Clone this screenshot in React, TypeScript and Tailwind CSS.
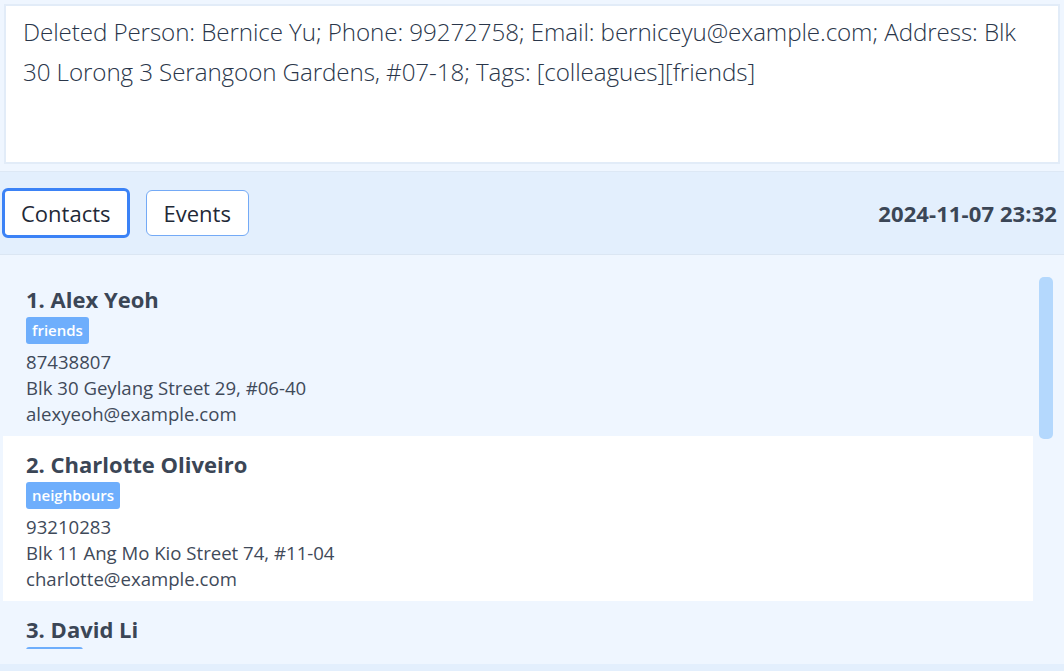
type Person = {
  name: string;
  tags: string[];
  phone: string;
  address: string;
  email: string;
};

const people: Person[] = [
  {
    name: "Alex Yeoh",
    tags: ["friends"],
    phone: "87438807",
    address: "Blk 30 Geylang Street 29, #06-40",
    email: "alexyeoh@example.com",
  },
  {
    name: "Charlotte Oliveiro",
    tags: ["neighbours"],
    phone: "93210283",
    address: "Blk 11 Ang Mo Kio Street 74, #11-04",
    email: "charlotte@example.com",
  },
  {
    name: "David Li",
    tags: ["family"],
    phone: "91031282",
    address: "Blk 436 Serangoon Gardens Street 26, #16-43",
    email: "lidavid@example.com",
  },
];

function PersonCard({ person, index }: { person: Person; index: number }) {
  return (
    <div
      className={
        "h-[165px] shrink-0 px-[23px] pt-[14px] pb-[9px] " +
        (index % 2 === 1 ? "bg-white" : "bg-[#eff6ff]")
      }
    >
      <div className="text-[22px] leading-[28px] font-bold text-[#3b4656]">
        {index + 1}. {person.name}
      </div>
      <div className="mt-[4px] flex gap-[5px]">
        {person.tags.map((tag) => (
          <span
            key={tag}
            className="h-[27px] px-[6px] rounded-[3px] bg-[#6eaefc] text-white text-[15px] leading-[27px] font-semibold"
          >
            {tag}
          </span>
        ))}
      </div>
      <div className="mt-[5px] text-[18.6px] leading-[26px] text-[#3f4a5a]">
        <div>{person.phone}</div>
        <div>{person.address}</div>
        <div>{person.email}</div>
      </div>
    </div>
  );
}

export default function App() {
  return (
    <div
      className="w-full h-[671px] flex flex-col overflow-hidden bg-[#eff6ff]"
      style={{ fontFamily: '"Open Sans", "Noto Sans", sans-serif' }}
    >
      {/* result display */}
      <div className="h-[172px] shrink-0 p-[4px] border-b border-[#dde8f5]">
        <div className="h-[160px] bg-white border-2 border-[#e2ecf8] px-[17px] pt-[6px]">
          <p className="text-[24.2px] leading-[40px] font-light text-[#2a364a] tracking-[-0.1px]">
            Deleted Person: Bernice Yu; Phone: 99272758; Email: berniceyu@example.com; Address: Blk 30 Lorong 3
            Serangoon Gardens, #07-18; Tags: [colleagues][friends]
          </p>
        </div>
      </div>

      {/* toolbar */}
      <div className="h-[83px] shrink-0 bg-[#e3effd] border-b border-[#dbe6f3] flex items-center justify-between pl-[2px] pr-[7px]">
        <div className="flex items-center gap-[16px]">
          <button className="h-[50px] px-[16px] rounded-[6px] border-[3px] border-[#3b82f6] bg-white text-[22px] text-[#1f2937]">
            Contacts
          </button>
          <button className="h-[46px] px-[17px] rounded-[6px] border border-[#74aaf6] bg-white text-[22px] text-[#1f2937]">
            Events
          </button>
        </div>
        <div className="text-[22px] font-bold text-[#3b4656] tracking-[0.1px]">2024-11-07 23:32</div>
      </div>

      {/* person list */}
      <div className="relative flex-1 min-h-0 bg-[#eff6ff] pt-[16px] px-[3px] pb-[15px] flex flex-col">
        <div className="flex-1 min-h-0 overflow-hidden flex flex-col pr-[28px]">
          {people.map((p, i) => (
            <PersonCard key={p.name} person={p} index={i} />
          ))}
        </div>
        <div className="absolute right-[11px] top-[22px] w-[14px] h-[162px] rounded-[5px] bg-[#b4d8fd]" />
      </div>
      <div className="h-[7px] shrink-0 bg-[#e3effd]" />
    </div>
  );
}
